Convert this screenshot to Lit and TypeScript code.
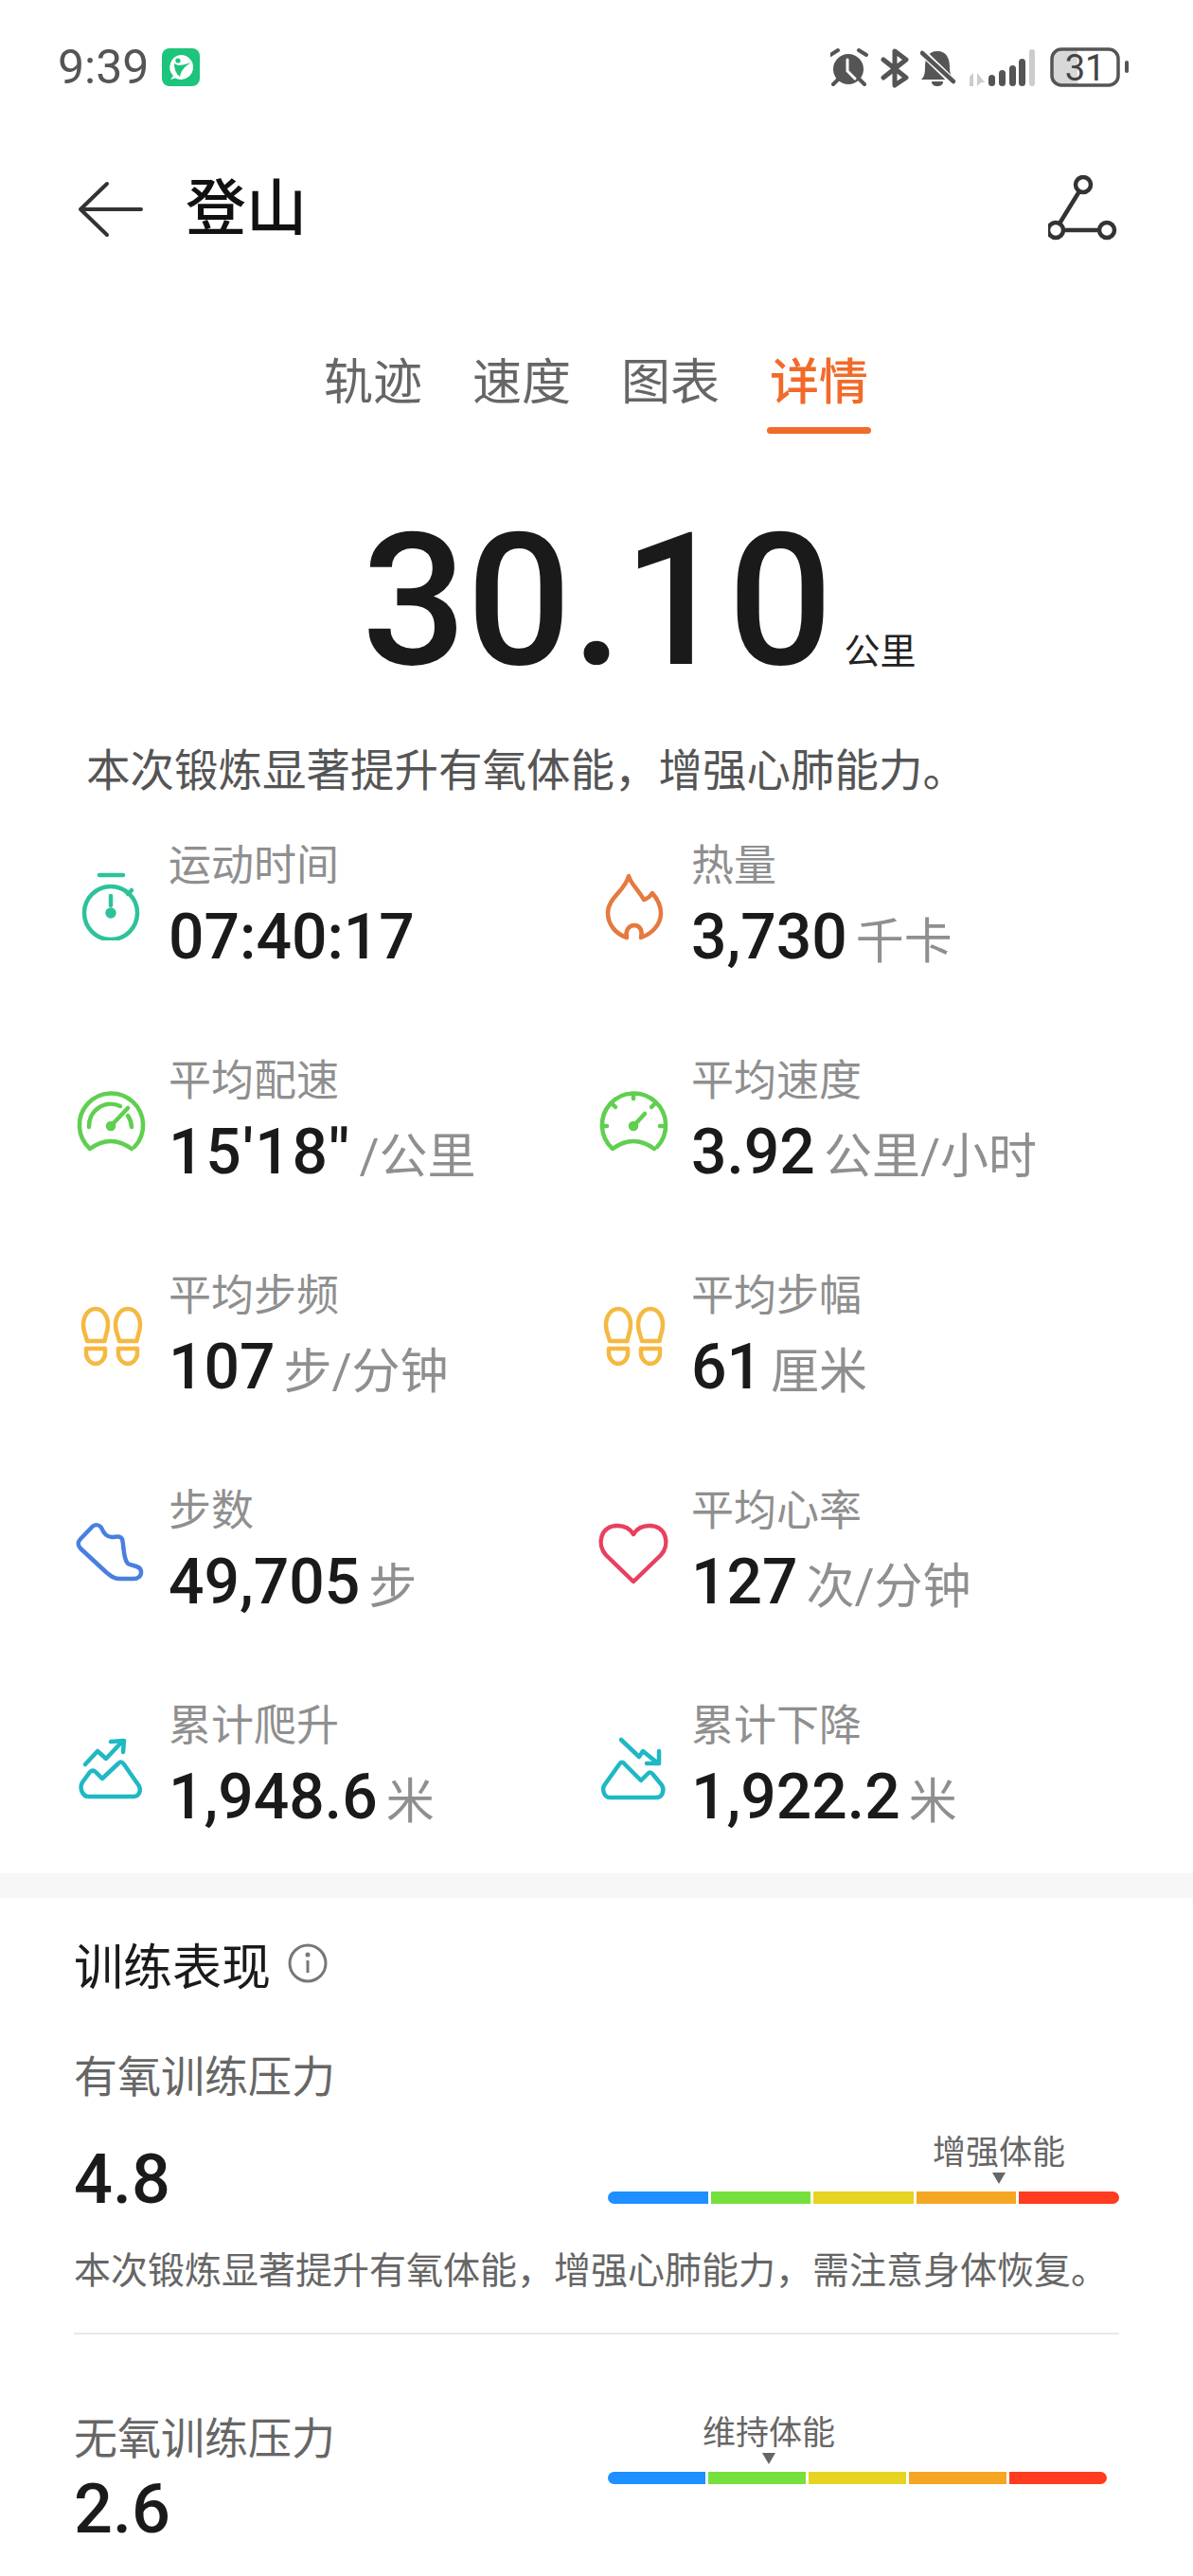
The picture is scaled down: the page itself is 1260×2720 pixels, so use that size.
import { LitElement, html, css, svg } from "lit";
import { customElement } from "lit/decorators.js";

const TEAL = "#1fb8c4";
const gaugeOuter = svg`<path d="M64 69A33.6 33.6 0 1 0 17 71Q39 55 61 71"/>`;
const footShape = svg`<path d="M23 13C31 13 36 21 36 30C36 37 33 42 32.5 47H14C13 42 10 37 10 30C10 21 15 13 23 13Z"/><path d="M13 55H33V60C33 66 28 71 23 71C18 71 13 66 13 60Z"/>`;

const icons: Record<string, unknown> = {
  watch: svg`<g stroke="#2ec29a"><circle cx="39" cy="49" r="28"/><path d="M27 9H52M57 29L61 25M39 31V41"/><circle cx="39" cy="49" r="3.5" fill="#2ec29a"/></g>`,
  flame: svg`<path stroke="#e5793f" d="M34 10C36 18 44 24 50 35C54 34 57 31 59 28C65 35 68 41 68 49C68 62 58 71 47 75C49 68 46 62 40 62C34 62 30 68 32 75C20 71 12 61 12 49C12 33 30 26 34 10Z"/>`,
  pace: svg`<g stroke="#5fcf4f">${gaugeOuter}<path d="M16 48A23 23 0 0 1 49 26M57 36A23 23 0 0 1 61 48M39 47L57 28"/><circle cx="39" cy="47" r="3" fill="#5fcf4f"/></g>`,
  speed: svg`<g stroke="#5fcf4f">${gaugeOuter}<path d="M39 13V18M16 23L20 27M62 23L58 27M6 47H11M67 47H72M39 47L51 34"/><circle cx="39" cy="47" r="3" fill="#5fcf4f"/></g>`,
  foot: svg`<g stroke="#f5b942">${footShape}<g transform="translate(34)">${footShape}</g></g>`,
  shoe: svg`<path stroke="#4a7fe0" d="M20 15.5C23 13.5 27 14 29 17C31 22 35 27 40 27C45 27 49 25 51 29C53 36 52 50 57 55C61 58 70 56 71 63C71.5 68 68 71 63 71L48 71C42 71 39 68 34 64L7 39C4 36 4 32 7 29Z"/>`,
  heart: svg`<path stroke="#e8405f" d="M39 74L10 46C0 35 4 15 22 15C30 15 36 19 39 24C42 19 48 15 56 15C74 15 78 35 68 46Z"/>`,
  up: svg`<g stroke="${TEAL}"><path d="M12 40L25 26L34 34L50 17M39 16L53 15L52 27"/><path d="M16 74H63C69 74 71 68 69 63L53 40C51 37 49 37 47 39L30 55L23 48C21 46 19 46 17 48L9 59C6 64 8 74 16 74Z"/></g>`,
  down: svg`<g stroke="${TEAL}"><path d="M26 14L45 32L49 26L65 39M66 26V39H53"/><path d="M14 75H63C70 75 72 67 69 62L60 51C58 48 56 48 54 50L47 57L30 40C28 37 26 37 24 40L9 61C5 66 8 75 14 75Z"/></g>`,
};

const stats = [
  ["watch", "运动时间", "07:40:17", ""],
  ["flame", "热量", "3,730", "千卡"],
  ["pace", "平均配速", "15'18''", "/公里"],
  ["speed", "平均速度", "3.92", "公里/小时"],
  ["foot", "平均步频", "107", "步/分钟"],
  ["foot", "平均步幅", "61", "厘米"],
  ["shoe", "步数", "49,705", "步"],
  ["heart", "平均心率", "127", "次/分钟"],
  ["up", "累计爬升", "1,948.6", "米"],
  ["down", "累计下降", "1,922.2", "米"],
];

const SEGS = ["#1e90ff", "#76e03c", "#e6d322", "#f5a623", "#ff3b20"];

@customElement("app-root")
export class AppRoot extends LitElement {
  static styles = css`
    :host { display: block; width: 1260px; height: 2720px; overflow: hidden; background: #fff;
      font-family: Roboto, "Noto Sans CJK SC", sans-serif; color: #1a1a1a; }
    .status { height: 142px; display: flex; align-items: center; padding: 0 68px 0 61px; box-sizing: border-box; }
    .time { font-size: 50px; color: #555; line-height: 60px; }
    .app { width: 40px; height: 40px; margin-left: 14px; display: block; }
    .sys { margin-left: auto; display: block; }
    .head { height: 158px; display: flex; align-items: center; padding: 0 78px 0 82px; }
    .head h1 { margin: 0 0 0 44px; font-size: 64px; font-weight: 500; line-height: 80px; color: #111; }
    .share { margin-left: auto; display: block; }
    .tabs { display: flex; gap: 53px; padding: 69px 0 0 342px; height: 91px; }
    .tab { font-size: 52px; line-height: 72px; color: #666; }
    .tab.on { color: #f26a2a; font-weight: 500; position: relative; }
    .tab.on::after { content: ""; display: block; height: 7px; border-radius: 4px; background: #f26a2a; margin: 10px -3px 0; }
    .big { display: flex; align-items: baseline; padding: 80px 0 0 382px; gap: 12px; }
    .big b { font-size: 195px; line-height: 190px; font-weight: 500; }
    .big span { font-size: 38px; color: #222; }
    .lead { margin: 54px 0 0 91px; font-size: 46.5px; line-height: 60px; color: #555; white-space: nowrap; }
    .grid { display: grid; grid-template-columns: 552px 1fr; row-gap: 82px; padding-left: 78px; margin-top: 41px; }
    .stat { display: flex; gap: 22px; height: 145px; }
    .stat > svg { margin-top: 30px; flex: none; fill: none; stroke-width: 4.5; stroke-linecap: round; stroke-linejoin: round; }
    .label { font-size: 45px; line-height: 60px; color: #8f8f8f; }
    .val { margin-top: 5px; font-size: 66px; line-height: 80px; font-weight: 500; white-space: nowrap; }
    .val.wide { letter-spacing: 1.7px; }
    .val span { font-size: 51px; font-weight: 400; color: #8f8f8f; margin-left: 9px; letter-spacing: 0; }
    .band { height: 26px; background: #f7f7f7; margin-top: 40px; }
    .section { padding: 0 78px; }
    .section-title { display: flex; align-items: center; gap: 18px; height: 94px; margin-top: 22px; font-size: 52px; font-weight: 400; color: #1a1a1a; }
    .mt { font-size: 46px; line-height: 60px; color: #666; }
    .first { margin-top: 43px; }
    .row { display: flex; justify-content: space-between; align-items: flex-end; height: 119px; }
    .num { font-size: 72px; line-height: 80px; font-weight: 500; }
    .barbox { display: flex; flex-direction: column; margin-bottom: 15px; }
    .mark { width: 140px; display: flex; flex-direction: column; align-items: center; font-size: 35px; line-height: 42px; color: #666; white-space: nowrap; }
    .mark i { display: block; margin-top: -1px; border-left: 7px solid transparent; border-right: 7px solid transparent; border-top: 12px solid #666; }
    .bar { display: flex; gap: 3px; margin-top: 8px; height: 13px; }
    .bar div { height: 13px; }
    .bar div:first-child { border-radius: 7px 0 0 7px; }
    .bar div:last-child { border-radius: 0 7px 7px 0; }
    .desc { font-size: 39px; line-height: 56px; color: #666; margin-top: 28px; white-space: nowrap; }
    .rule { height: 2px; background: #e8e8e8; margin-top: 37px; }
    .second { display: flex; align-items: flex-start; padding-top: 80px; padding-right: 13px; justify-content: space-between; }
    .second .num { margin-top: 5px; }
    .second .barbox { margin: 4px 0 0; }
  `;

  private bar(w: number, off: number, text: string) {
    return html`<div class="barbox">
      <div class="mark" style="margin-left:${off}px">${text}<i></i></div>
      <div class="bar">${SEGS.map((c) => html`<div style="width:${w}px;background:${c}"></div>`)}</div>
    </div>`;
  }

  render() {
    return html`
      <div class="status">
        <span class="time">9:39</span>
        <svg class="app" width="40" height="40" viewBox="0 0 40 40">
          <rect width="40" height="40" rx="8" fill="#1dc47c"/>
          <path d="M20 7A13 13 0 1 1 14 31.5L9 33L12 29A13 13 0 0 1 20 7Z" fill="#fff"/>
          <circle cx="17" cy="13" r="2.6" fill="#1dc47c"/>
          <path d="M13 16C13 22 15 27 19 30C20 24 23 20 31 15C25 17 21 18 17 18Z" fill="#1dc47c"/>
        </svg>
        <svg class="sys" width="315" height="44" viewBox="877 50 315 44">
          <g fill="#555" stroke="#555" stroke-linecap="round">
            <circle cx="896" cy="74" r="16" stroke="none"/>
            <path d="M877 59L885 54M915 59L907 54M880 90L885 85M913 90L908 85" stroke-width="4" fill="none"/>
            <path d="M895 64V76L903 84" stroke="#fff" stroke-width="3" fill="none"/>
            <path d="M933 64L957 83L945 91V55L957 64L933 83" stroke-width="5" fill="none" stroke-linejoin="round"/>
            <path d="M990 55C1000 55 1003 63 1003 72C1003 79 1005 82 1008 85H973C976 82 977 79 977 72C977 63 980 55 990 55Z" stroke="none"/>
            <path d="M984 87H996C996 91 993 92 990 92C987 92 984 91 984 87Z" stroke="none"/>
            <path d="M974 56L1007 88" stroke="#fff" stroke-width="8" fill="none"/>
            <path d="M974 57L1007 87" stroke-width="4.5" fill="none"/>
          </g>
          <g stroke="none">
            <path d="M1024 92V82L1028 78V92ZM1032 78V92L1036 88H1040" fill="#ccc"/>
            <rect x="1044" y="80" width="7" height="12" rx="3.5" fill="#555"/>
            <rect x="1055" y="75" width="7" height="17" rx="3.5" fill="#555"/>
            <rect x="1066" y="70" width="7" height="22" rx="3.5" fill="#555"/>
            <rect x="1076" y="63" width="7" height="29" rx="3.5" fill="#555"/>
            <rect x="1087" y="53" width="6" height="39" rx="3" fill="#ccc"/>
            <path d="M1122 54H1138V90H1122A10 10 0 0 1 1112 80V64A10 10 0 0 1 1122 54Z" fill="#d8d8d8"/>
            <rect x="1188" y="65" width="4" height="13" rx="2" fill="#555"/>
          </g>
          <rect x="1111" y="53" width="70" height="38" rx="10" fill="none" stroke="#555" stroke-width="3.5"/>
          <text x="1146" y="86" text-anchor="middle" font-size="38" fill="#444" font-family="Roboto">31</text>
        </svg>
      </div>

      <div class="head">
        <svg width="70" height="60" viewBox="0 0 70 60" fill="none" stroke="#333" stroke-width="4" stroke-linecap="round" stroke-linejoin="round">
          <path d="M31 3L3 30L31 57M3 30H67"/>
        </svg>
        <h1>登山</h1>
        <svg class="share" width="75" height="72" viewBox="0 0 75 72" fill="none" stroke="#333" stroke-width="4.5">
          <circle cx="37" cy="10" r="8"/><circle cx="8" cy="58" r="8"/><circle cx="62" cy="58" r="8"/>
          <path d="M33 17L12 51M16 58H54"/>
        </svg>
      </div>

      <div class="tabs">
        <div class="tab">轨迹</div><div class="tab">速度</div><div class="tab">图表</div><div class="tab on">详情</div>
      </div>

      <div class="big"><b>30.10</b><span>公里</span></div>
      <div class="lead">本次锻炼显著提升有氧体能，增强心肺能力。</div>

      <div class="grid">
        ${stats.map(([ic, l, v, u]) => html`<div class="stat">
          <svg width="78" height="78" viewBox="0 0 78 78">${icons[ic]}</svg>
          <div><div class="label">${l}</div><div class="val ${v.includes("'") ? "wide" : ""}">${v}${u ? html`<span>${u}</span>` : ""}</div></div>
        </div>`)}
      </div>

      <div class="band"></div>

      <div class="section">
        <div class="section-title">训练表现
          <svg width="42" height="42" viewBox="0 0 42 42" fill="none" stroke="#777" stroke-width="3">
            <circle cx="21" cy="21" r="19"/><path d="M21 18V31"/><circle cx="21" cy="12" r="1" fill="#777"/>
          </svg>
        </div>
        <div class="mt first">有氧训练压力</div>
        <div class="row"><div class="num">4.8</div>${this.bar(105.6, 343, "增强体能")}</div>
        <div class="desc">本次锻炼显著提升有氧体能，增强心肺能力，需注意身体恢复。</div>
        <div class="rule"></div>
        <div class="second">
          <div><div class="mt">无氧训练压力</div><div class="num">2.6</div></div>
          ${this.bar(103, 100, "维持体能")}
        </div>
      </div>
    `;
  }
}
